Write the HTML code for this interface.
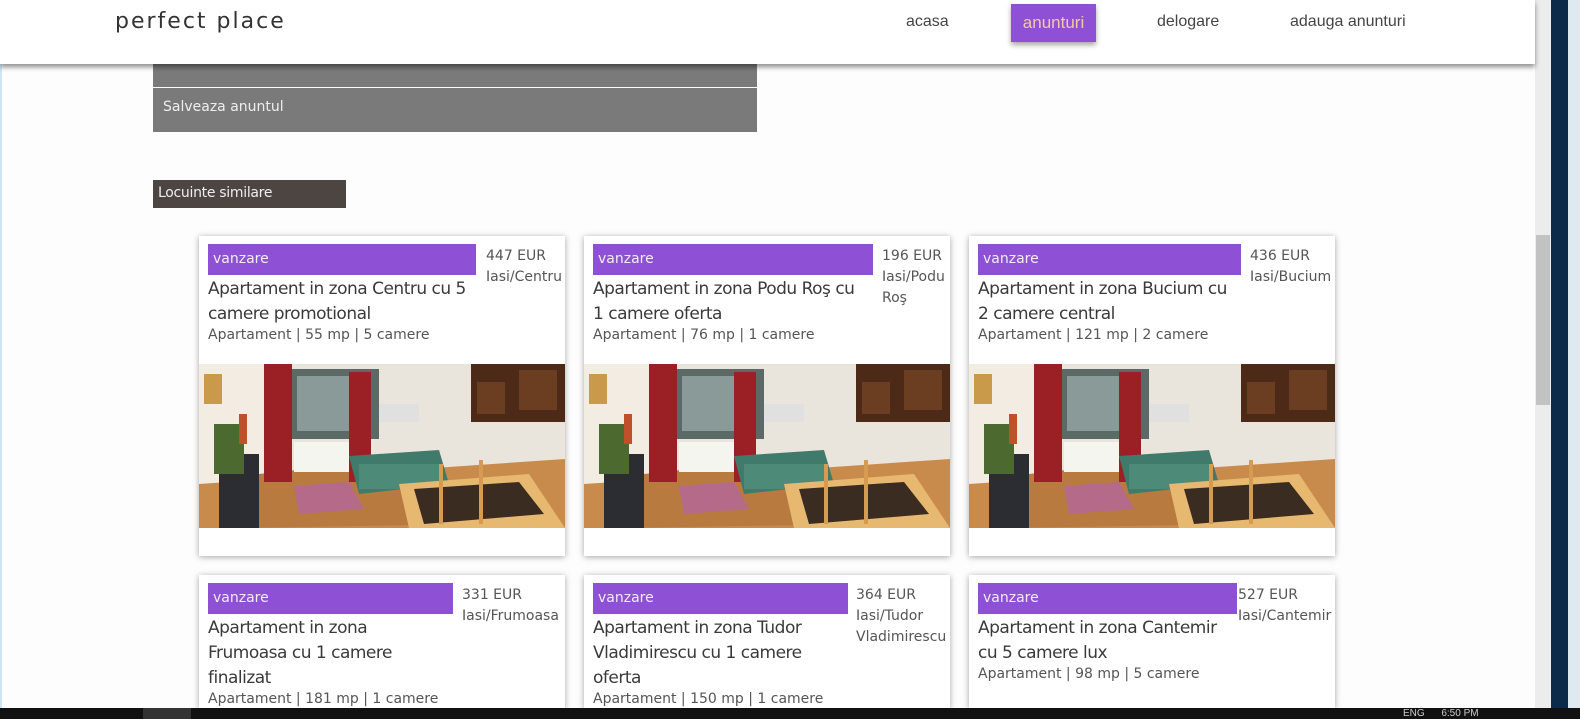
<!DOCTYPE html>
<html style="width:1580px;height:719px;overflow:hidden"><head><meta charset="utf-8"><style>
*{margin:0;padding:0;box-sizing:border-box}
body{width:1580px;height:719px;overflow:hidden;background:#fdfdfd;font-family:"Liberation Sans",sans-serif;position:relative}
.hdr{position:absolute;left:0;top:0;width:1535px;height:64px;background:#fff;box-shadow:0 3px 5px rgba(0,0,0,.45);z-index:5}
.logo{position:absolute;left:115px;top:9px;font-family:"DejaVu Sans",sans-serif;font-size:22px;letter-spacing:2px;color:#333}
.nav{position:absolute;top:13px;font-size:16px;color:#444}
.act{position:absolute;left:1011px;top:4px;width:85px;height:38px;background:#8e51d6;color:#f4c9a0;font-size:17px;text-align:center;line-height:38px;box-shadow:0 3px 5px rgba(0,0,0,.35)}
.gbox{position:absolute;left:153px;width:604px;background:#7a7a7a;color:#eee;font-family:"DejaVu Sans",sans-serif;font-size:14px;padding-left:10px}
.sim{position:absolute;left:153px;top:180px;width:193px;height:28px;background:#4d4542;color:#eee;font-family:"DejaVu Sans",sans-serif;font-size:14px;padding:5px 5px;letter-spacing:-.3px}
.card{position:absolute;width:366px;height:320px;background:#fff;box-shadow:0 1px 6px rgba(0,0,0,.35);overflow:hidden;font-family:"DejaVu Sans",sans-serif;color:#444}
.tag{position:absolute;left:9px;top:8px;height:31px;background:#8e51d6;color:#eee;font-size:14px;padding:7px 5px}
.pr{position:absolute;top:10px;font-size:14px;line-height:21px;color:#555}
.tt{position:absolute;left:9px;top:41px;width:262px;font-size:17px;line-height:25px;color:#3a3a3a;letter-spacing:-.5px}
.mt{position:absolute;left:9px;font-size:14px;color:#555}
.img{position:absolute;left:0;top:128px;width:366px;height:164px}
.sb{position:absolute;left:1535px;top:0;width:16px;height:708px;background:#ececec}
.task{position:absolute;left:0;top:708px;width:1580px;height:11px;background:#111;z-index:9}
</style></head><body>
<div style="position:absolute;left:0;top:0;width:2px;height:708px;background:#cfe6f2"></div>
<div class="gbox" style="top:50px;height:37px;"></div>
<div class="gbox" style="top:88px;height:44px;padding-top:11px">Salveaza anuntul</div>
<div class="sim">Locuinte similare</div>

<svg width="0" height="0" style="position:absolute"><defs>
<g id="room">
<rect width="366" height="164" fill="#e9e4dc"/>
<rect x="0" y="0" width="80" height="164" fill="#f2ece2"/>
<polygon points="0,120 366,95 366,164 0,164" fill="#c98b4c"/>
<polygon points="60,110 200,95 280,160 40,164" fill="#b97a40"/>
<rect x="90" y="5" width="90" height="70" fill="#5b6a66"/>
<rect x="98" y="12" width="74" height="55" fill="#8a9a98"/>
<rect x="95" y="78" width="60" height="30" fill="#f5f5f0"/>
<rect x="65" y="0" width="28" height="118" fill="#9a2025"/>
<rect x="150" y="8" width="22" height="110" fill="#9a2025"/>
<rect x="180" y="40" width="40" height="18" fill="#e0e0e0"/>
<rect x="272" y="0" width="94" height="58" fill="#4d2a18"/>
<rect x="278" y="18" width="28" height="32" fill="#6b3e22"/>
<rect x="320" y="6" width="38" height="40" fill="#6b3e22"/>
<polygon points="150,92 240,86 250,120 160,130" fill="#3f7a6a"/>
<rect x="160" y="100" width="80" height="25" fill="#4d8a78"/>
<polygon points="200,120 330,110 366,164 210,164" fill="#e7b870"/>
<polygon points="215,125 320,118 345,150 225,160" fill="#3b2c22"/>
<rect x="240" y="100" width="4" height="60" fill="#d69a50"/>
<rect x="280" y="96" width="4" height="64" fill="#d69a50"/>
<polygon points="95,122 150,118 165,145 100,150" fill="#b56a8a"/>
<rect x="20" y="90" width="40" height="74" fill="#2b2d33"/>
<rect x="15" y="60" width="30" height="50" fill="#4c6a30"/>
<rect x="40" y="50" width="8" height="30" fill="#c0502a"/>
<rect x="5" y="10" width="18" height="30" fill="#c89a4a"/>
</g></defs></svg>

<div class="card" style="left:199px;top:236px"><div class="tag" style="width:268px">vanzare</div><div class="pr" style="left:287px">447 EUR<br>Iasi/Centru</div><div class="tt">Apartament in zona Centru cu 5 camere promotional</div><div class="mt" style="top:91px">Apartament | 55 mp | 5 camere</div><svg class="img"><use href="#room"/></svg></div>
<div class="card" style="left:584px;top:236px"><div class="tag" style="width:280px">vanzare</div><div class="pr" style="left:298px">196 EUR<br>Iasi/Podu<br>Roş</div><div class="tt" style="width:275px">Apartament in zona Podu Roş cu 1 camere oferta</div><div class="mt" style="top:91px">Apartament | 76 mp | 1 camere</div><svg class="img"><use href="#room"/></svg></div>
<div class="card" style="left:969px;top:236px"><div class="tag" style="width:263px">vanzare</div><div class="pr" style="left:281px">436 EUR<br>Iasi/Bucium</div><div class="tt">Apartament in zona Bucium cu 2 camere central</div><div class="mt" style="top:91px">Apartament | 121 mp | 2 camere</div><svg class="img"><use href="#room"/></svg></div>

<div class="card" style="left:199px;top:575px;height:133px"><div class="tag" style="width:245px">vanzare</div><div class="pr" style="left:263px">331 EUR<br>Iasi/Frumoasa</div><div class="tt" style="width:230px">Apartament in zona Frumoasa cu 1 camere finalizat</div><div class="mt" style="top:116px">Apartament | 181 mp | 1 camere</div></div>
<div class="card" style="left:584px;top:575px;height:133px"><div class="tag" style="width:255px">vanzare</div><div class="pr" style="left:272px">364 EUR<br>Iasi/Tudor<br>Vladimirescu</div><div class="tt" style="width:245px">Apartament in zona Tudor Vladimirescu cu 1 camere oferta</div><div class="mt" style="top:116px">Apartament | 150 mp | 1 camere</div></div>
<div class="card" style="left:969px;top:575px;height:133px"><div class="tag" style="width:259px">vanzare</div><div class="pr" style="left:269px">527 EUR<br>Iasi/Cantemir</div><div class="tt" style="width:262px">Apartament in zona Cantemir cu 5 camere lux</div><div class="mt" style="top:91px">Apartament | 98 mp | 5 camere</div></div>

<div class="hdr"><div class="logo">perfect place</div>
<div class="nav" style="left:906px">acasa</div>
<div class="act">anunturi</div>
<div class="nav" style="left:1157px">delogare</div>
<div class="nav" style="left:1290px">adauga anunturi</div></div>

<div class="sb"><div style="position:absolute;left:1px;top:235px;width:14px;height:170px;background:#c2c2c2"></div></div>
<div style="position:absolute;left:1551px;top:0;width:17px;height:708px;background:#0c2a4a"></div>
<div style="position:absolute;left:1568px;top:0;width:12px;height:708px;background:#dfeaf0"></div>
<div class="task"><div style="position:absolute;left:143px;width:48px;height:11px;background:#333"></div><div style="position:absolute;left:1403px;top:0;color:#ccc;font-size:10px;line-height:11px">ENG &nbsp;&nbsp;&nbsp;&nbsp;&nbsp;6:50 PM</div></div>
</body></html>
